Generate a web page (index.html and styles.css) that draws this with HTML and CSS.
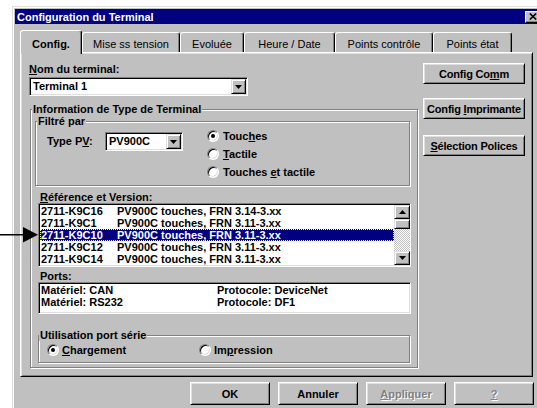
FILE: index.html
```html
<!DOCTYPE html>
<html lang="fr">
<head>
<meta charset="utf-8">
<title>Configuration du Terminal</title>
<link rel="stylesheet" href="styles.css">
</head>
<body>
<svg class="pointer" width="40" height="18" viewBox="0 0 40 18">
  <rect x="0" y="8" width="26" height="1.5" fill="#000"/>
  <polygon points="23,1 38,8.75 23,16.5" fill="#000"/>
</svg>

<div class="window">
  <div class="titlebar">
    <span class="title">Configuration du Terminal</span>
    <span class="close">
      <svg width="8" height="7" viewBox="0 0 8 7"><path d="M0.8 0.5L7.2 6.5M7.2 0.5L0.8 6.5" stroke="#000" stroke-width="1.6"/></svg>
    </span>
  </div>

  <div class="content">
    <div class="tabs">
      <div class="tab active" style="width:62px">Config.</div>
      <div class="tab" style="width:98px">Mise ss tension</div>
      <div class="tab" style="width:64px">Evoluée</div>
      <div class="tab" style="width:91px">Heure / Date</div>
      <div class="tab" style="width:98px">Points contrôle</div>
      <div class="tab" style="width:79px">Points état</div>
    </div>

    <div class="panel">
      <div class="main-col">
        <span class="field-label"><u>N</u>om du terminal:</span>
        <div class="combo combo-name">
          <span class="combo-text">Terminal 1</span>
          <span class="drop"><svg width="7" height="4" viewBox="0 0 7 4"><polygon points="0,0 7,0 3.5,4" fill="#000"/></svg></span>
        </div>

        <fieldset class="group info">
          <legend>Information de Type de Terminal</legend>

          <fieldset class="group filter">
            <legend>Filtré par</legend>
            <div class="filter-row">
              <span class="type-label">Type P<u>V</u>:</span>
              <div class="combo combo-type">
                <span class="combo-text">PV900C</span>
                <span class="drop"><svg width="7" height="4" viewBox="0 0 7 4"><polygon points="0,0 7,0 3.5,4" fill="#000"/></svg></span>
              </div>
              <div class="radio-col">
                <label class="radio"><span class="dot checked"></span><span>Touc<u>h</u>es</span></label>
                <label class="radio"><span class="dot"></span><span><u>T</u>actile</span></label>
                <label class="radio"><span class="dot"></span><span>Touches <u>e</u>t tactile</span></label>
              </div>
            </div>
          </fieldset>

          <span class="sub-label"><u>R</u>éférence et Version:</span>
          <div class="listbox">
            <div class="rows">
              <div class="row"><span class="ref">2711-K9C16</span><span>PV900C touches, FRN 3.14-3.xx</span></div>
              <div class="row"><span class="ref">2711-K9C1</span><span>PV900C touches, FRN 3.11-3.xx</span></div>
              <div class="row selected"><span class="ref">2711-K9C10</span><span>PV900C touches, FRN 3.11-3.xx</span></div>
              <div class="row"><span class="ref">2711-K9C12</span><span>PV900C touches, FRN 3.11-3.xx</span></div>
              <div class="row"><span class="ref">2711-K9C14</span><span>PV900C touches, FRN 3.11-3.xx</span></div>
            </div>
            <div class="scrollbar">
              <span class="sb-btn"><svg width="7" height="4" viewBox="0 0 7 4"><polygon points="0,4 7,4 3.5,0" fill="#000"/></svg></span>
              <span class="sb-thumb"></span>
              <span class="sb-track"></span>
              <span class="sb-btn"><svg width="7" height="4" viewBox="0 0 7 4"><polygon points="0,0 7,0 3.5,4" fill="#000"/></svg></span>
            </div>
          </div>

          <span class="sub-label ports-label">Ports:</span>
          <div class="portsbox">
            <div class="row"><span class="hw">Matériel: CAN</span><span>Protocole: DeviceNet</span></div>
            <div class="row"><span class="hw">Matériel: RS232</span><span>Protocole: DF1</span></div>
          </div>

          <fieldset class="group usage">
            <legend>Utilisation port série</legend>
            <div class="usage-row">
              <label class="radio usage-item"><span class="dot checked"></span><span><u>C</u>hargement</span></label>
              <label class="radio usage-item"><span class="dot"></span><span>Im<u>p</u>ression</span></label>
            </div>
          </fieldset>
        </fieldset>
      </div>

      <div class="side-col">
        <button class="btn side-btn"><span>Config Co<u>m</u>m</span></button>
        <button class="btn side-btn second"><span>Config <u>I</u>mprimante</span></button>
        <button class="btn side-btn third"><span><u>S</u>élection Polices</span></button>
      </div>
    </div>

    <div class="footer">
      <button class="btn foot-btn"><span>OK</span></button>
      <button class="btn foot-btn"><span>Annuler</span></button>
      <button class="btn foot-btn disabled"><span><u>A</u>ppliquer</span></button>
      <button class="btn foot-btn disabled"><span><u>?</u></span></button>
    </div>
  </div>
</div>
</body>
</html>
```

FILE: styles.css
```css
* { box-sizing: border-box; }

html, body {
  margin: 0;
  overflow: hidden;
}

body {
  position: relative;
  width: 537px;
  height: 408px;
  padding: 6px 0 0 12px;
  background: #fff;
  color: #000;
  font: bold 11px/12px "Liberation Sans", Arial, sans-serif;
}

u { text-decoration: underline; text-underline-offset: 1px; }

/* arrow pointing at the selected catalogue row */
.pointer {
  position: absolute;
  left: 0;
  top: 226px;
  z-index: 5;
}

/* ---- window frame ---- */
.window {
  width: 534px;
  height: 420px;
  padding: 2px;
  background: #c0c0c0;
  border: 1px solid;
  border-color: #dfdfdf #000 #000 #dfdfdf;
  box-shadow: inset 1px 1px #fff, inset -1px -1px #808080;
}

.titlebar {
  display: flex;
  align-items: center;
  justify-content: space-between;
  height: 15px;
  padding: 0 2px;
  background: #000080;
  color: #fff;
}

.close {
  display: flex;
  align-items: center;
  justify-content: center;
  width: 16px;
  height: 12px;
  background: #c0c0c0;
  border: 1px solid;
  border-color: #fff #000 #000 #fff;
  box-shadow: inset -1px -1px #808080;
}

.content {
  padding: 6px 0 0 5px;
}

/* ---- tabs ---- */
.tabs {
  position: relative;
  z-index: 1;
  display: flex;
  align-items: flex-end;
  height: 24px;
  margin-bottom: -2px;
}

.tab {
  flex: none;
  height: 20px;
  margin-bottom: 2px;
  padding-top: 5px;
  text-align: center;
  font-weight: normal;
  white-space: nowrap;
  background: #c0c0c0;
  border: 1px solid;
  border-bottom: 0;
  border-color: #fff #000 #000 #fff;
  border-radius: 3px 3px 0 0;
  box-shadow: inset -1px 0 #808080;
}

.tab.active {
  height: 24px;
  margin-bottom: 0;
  padding-top: 7px;
  font-weight: bold;
}

/* ---- property page ---- */
.panel {
  display: flex;
  gap: 4px;
  width: 513px;
  height: 325px;
  padding: 10px 7px 0 8px;
  border: 1px solid;
  border-color: #fff #000 #000 #fff;
  box-shadow: inset 1px 1px #dfdfdf, inset -1px -1px #808080;
}

.main-col {
  flex: none;
  width: 390px;
}

.side-col {
  flex: none;
  width: 102px;
  display: flex;
  flex-direction: column;
}

.field-label {
  display: block;
  line-height: 13px;
}

/* ---- combo boxes ---- */
.combo {
  display: flex;
  align-items: stretch;
  height: 19px;
  padding: 2px 2px 2px 3px;
  background: #fff;
  border: 1px solid;
  border-color: #808080 #fff #fff #808080;
  box-shadow: inset 1px 1px #000, inset -1px -1px #dfdfdf;
}

.combo-text {
  flex: 1;
  line-height: 13px;
}

.drop {
  display: flex;
  align-items: center;
  justify-content: center;
  width: 15px;
  margin: -1px -1px -1px 0;
  background: #c0c0c0;
  border: 1px solid;
  border-color: #dfdfdf #000 #000 #dfdfdf;
  box-shadow: inset 1px 1px #fff, inset -1px -1px #808080;
}

.combo-name {
  width: 219px;
  margin-top: 1px;
}

.combo-type {
  width: 78px;
  margin-top: 5px;
}

/* ---- group boxes ---- */
.group {
  margin: 0;
  min-width: 0;
  border: 1px solid #808080;
  box-shadow: inset 1px 1px #fff, 1px 1px #fff;
}

.group > legend {
  padding: 0 1px;
  line-height: 12px;
  background: #c0c0c0;
}

.info {
  width: 388px;
  margin: 7px 0 0 1px;
  padding: 0 7px 4px 4px;
}

.info > legend { margin-left: -3px; }

.filter {
  width: 375px;
  padding: 0 0 4px 11px;
}

.filter > legend { margin-left: -10px; }

.filter-row {
  display: flex;
  align-items: flex-start;
}

.type-label {
  flex: none;
  width: 58px;
  margin-top: 5px;
  line-height: 19px;
}

.radio-col {
  margin-left: 24px;
}

.radio {
  display: flex;
  align-items: center;
  gap: 4px;
  height: 18px;
  white-space: nowrap;
}

.dot {
  flex: none;
  display: flex;
  align-items: center;
  justify-content: center;
  width: 12px;
  height: 12px;
  border-radius: 50%;
  background: #fff;
  border: 1px solid;
  border-color: #808080 #fff #fff #808080;
  box-shadow: inset 1px 1px #000, inset -1px -1px #dfdfdf;
}

.dot.checked::after {
  content: "";
  width: 4px;
  height: 4px;
  border-radius: 50%;
  background: #000;
}

.sub-label {
  display: block;
  margin: 5px 0 0 5px;
  line-height: 12px;
}

.sub-label.ports-label { margin-top: 3px; }

/* ---- list boxes ---- */
.listbox,
.portsbox {
  width: 373px;
  margin-left: 3px;
  background: #fff;
  border: 1px solid;
  border-color: #808080 #fff #fff #808080;
  box-shadow: inset 1px 1px #000, inset -1px -1px #dfdfdf;
}

.listbox {
  display: flex;
  height: 64px;
  padding: 1px 0 1px 1px;
}

.portsbox {
  height: 32px;
  padding: 1px;
}

.rows { flex: 1; }

.row {
  display: flex;
  height: 12px;
  padding-left: 1px;
  line-height: 12px;
  white-space: nowrap;
}

.row .ref { width: 76px; flex: none; }
.row .hw { width: 176px; flex: none; }

.row.selected {
  background: #000080;
  color: #fff;
  outline: 1px dotted #ffff80;
  outline-offset: -1px;
}

.scrollbar {
  display: flex;
  flex-direction: column;
  width: 16px;
}

.sb-btn,
.sb-thumb {
  display: flex;
  align-items: center;
  justify-content: center;
  background: #c0c0c0;
  border: 1px solid;
  border-color: #dfdfdf #000 #000 #dfdfdf;
  box-shadow: inset 1px 1px #fff, inset -1px -1px #808080;
}

.sb-btn { height: 14px; }
.sb-thumb { height: 10px; }

.sb-track {
  flex: 1;
  background: repeating-conic-gradient(#c0c0c0 0 25%, #fff 0 50%) 0 0 / 2px 2px;
}

.usage {
  width: 372px;
  margin: 15px 0 0 3px;
  padding: 0 0 3px 8px;
}

.usage > legend { margin-left: -8px; }

.usage-row { display: flex; }

.usage-item { width: 152px; gap: 3px; }

/* ---- push buttons ---- */
.btn {
  display: flex;
  align-items: center;
  justify-content: center;
  padding: 0;
  font: inherit;
  color: #000;
  white-space: nowrap;
  background: #c0c0c0;
  border: 1px solid;
  border-color: #fff #000 #000 #fff;
  box-shadow: inset 1px 1px #dfdfdf, inset -1px -1px #808080;
}

.side-btn { height: 21px; letter-spacing: -0.2px; }
.side-btn.second { margin-top: 14px; }
.side-btn.third { margin-top: 16px; }

.footer {
  display: flex;
  gap: 8px;
  margin-top: 5px;
  padding-left: 170px;
}

.foot-btn {
  flex: none;
  width: 80px;
  height: 23px;
}

.btn.disabled {
  color: #808080;
  text-shadow: 1px 1px #fff;
}
```
